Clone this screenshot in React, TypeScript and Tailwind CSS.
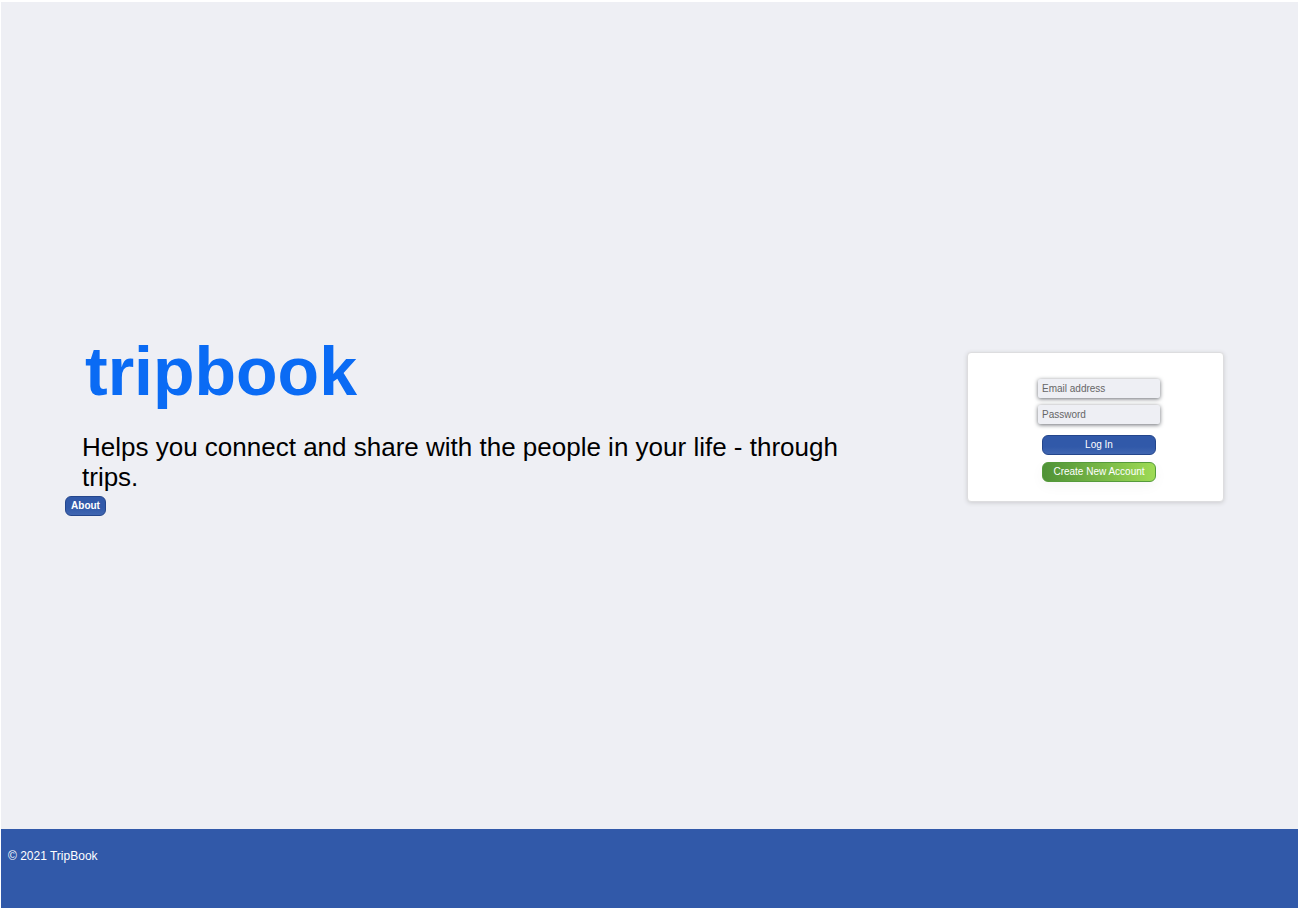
const fieldClass =
  "h-[19px] w-[122px] rounded-xs border-none bg-[#eeeff4] px-1 text-[10px] text-gray-700 placeholder-[#666] shadow-[0_1px_4px_#6b6e74] outline-none";

const blueButton =
  "rounded-md border border-[#24468c] bg-linear-to-b from-[#3159a9] from-60% to-[#4066b1] text-[10px] leading-none text-white";

export default function App() {
  return (
    <div className="flex min-h-screen flex-col border-l border-t-2 border-white bg-[#eeeff4] font-['Liberation_Sans',Arial,sans-serif] text-black">
      <main className="flex flex-1 items-center justify-between pt-[22px] pr-[74px] pl-16">
        <section className="flex w-[70%] flex-col items-start pb-[3px]">
          <h1 className="mb-[25px] pl-5 text-[68px] leading-[72px] font-bold text-[#0a6bf4]">tripbook</h1>
          <p className="mb-1 pl-[17px] text-[26px] leading-[30px]">
            Helps you connect and share with the people in your life - through trips.
          </p>
          <button type="button" className={`${blueButton} h-5 w-[41px] font-bold`}>
            About
          </button>
        </section>

        <form
          className="flex w-[257px] flex-col items-center rounded-sm border border-[#dddddf] bg-white pt-[26px] pb-[19px] pl-[7px] shadow-[0_1px_4px_#cccdd0]"
          onSubmit={(event) => event.preventDefault()}
        >
          <input type="email" aria-label="Email address" placeholder="Email address" className={`${fieldClass} mb-[7px]`} />
          <input type="password" aria-label="Password" placeholder="Password" className={`${fieldClass} mb-[11px]`} />
          <button type="submit" className={`${blueButton} mb-[7px] h-5 w-[114px]`}>
            Log In
          </button>
          <button
            type="button"
            className="h-5 w-[114px] rounded-md border border-[#559b3b] bg-linear-to-r from-[#4f9237] to-[#9edb55] text-[10px] leading-none whitespace-nowrap text-white shadow-[0_4px_14px_#0000000a]"
          >
            Create New Account
          </button>
        </form>
      </main>

      <footer className="bg-[#3159a9] px-[7px] pt-[18px] pb-[43px] text-xs leading-[18px] text-white">
        © 2021 TripBook
      </footer>
    </div>
  );
}
